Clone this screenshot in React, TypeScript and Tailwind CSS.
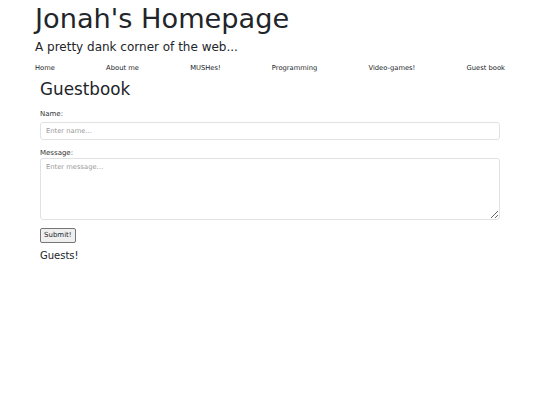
const NAV_LINKS = ["Home", "About me", "MUSHes!", "Programming", "Video-games!", "Guest book"];

export default function App() {
  return (
    <div className="w-[540px] h-[405px] bg-white text-[#212529] font-['DejaVu_Sans',sans-serif]">
      {/* Header */}
      <div className="pl-[35px] pt-[3px]">
        <h1 className="text-[27.2px] leading-[32px]">Jonah's Homepage</h1>
        <h4 className="mt-[4px] text-[12px] leading-[16px]">A pretty dank corner of the web...</h4>
      </div>

      {/* Nav */}
      <nav className="mt-[8px] px-[35px] flex justify-between text-[6.75px] leading-[10px]">
        {NAV_LINKS.map((link) => (
          <a key={link} href="#" className="text-[#212529]">
            {link}
          </a>
        ))}
      </nav>

      {/* Guestbook */}
      <div className="px-[40px]">
        <h2 className="mt-[4px] text-[16.8px] leading-[24px]">Guestbook</h2>
        <form className="mt-[8px]" onSubmit={(e) => e.preventDefault()}>
          <label className="block text-[7px] leading-[10px] text-[#333]">Name:</label>
          <input
            className="mt-[3px] block w-full h-[18px] px-[5px] rounded-[3px] border border-[#e0e3e6] text-[6.75px] placeholder:text-[#999] outline-none"
            placeholder="Enter name..."
          />
          <label className="mt-[8px] block text-[7px] leading-[10px] text-[#333]">Message:</label>
          <textarea
            className="block w-full h-[62px] px-[5px] py-[3px] rounded-[3px] border border-[#e0e3e6] text-[6.75px] placeholder:text-[#999] outline-none"
            placeholder="Enter message..."
          />
          <button
            type="submit"
            className="mt-[8px] block h-[15px] px-[3px] border border-[#767676] bg-[#efefef] text-[7px] leading-none rounded-[2px]"
          >
            Submit!
          </button>
        </form>
        <p className="mt-[6px] text-[10px] leading-[14px]">Guests!</p>
      </div>
    </div>
  );
}
